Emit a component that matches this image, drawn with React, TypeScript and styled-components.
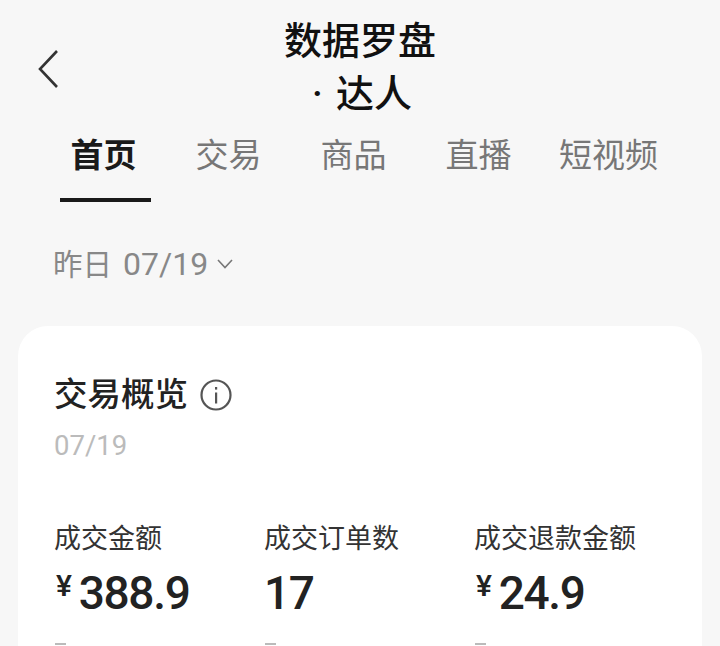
import React from 'react';
import styled, { createGlobalStyle } from 'styled-components';

const GlobalStyle = createGlobalStyle`
  html, body {
    margin: 0;
    padding: 0;
    height: 646px;
    overflow: hidden;
    background: #f7f7f7;
  }
  body {
    font-family: "Roboto", "Noto Sans CJK SC", sans-serif;
  }
`;

const Page = styled.div`
  width: 720px;
  height: 646px;
  overflow: hidden;
`;

const Header = styled.header`
  display: grid;
  grid-template-columns: 36px 1fr 36px;
  padding: 15px 36px 0;
  height: 111px;
  box-sizing: border-box;
`;

const BackButton = styled.div`
  display: flex;
  align-items: flex-start;
  padding-top: 34px;
`;

const Title = styled.h1`
  margin: 0;
  text-align: center;
  font-size: 38px;
  line-height: 53px;
  font-weight: 500;
  color: #111;
`;

const TitleLine = styled.div<{ $shift?: boolean }>`
  white-space: nowrap;
  word-spacing: ${(p) => (p.$shift ? 4 : 0)}px;
  padding-left: ${(p) => (p.$shift ? 4 : 0)}px;
`;

const Tabs = styled.nav`
  display: flex;
  padding-left: 41px;
  height: 91px;
`;

const Tab = styled.div<{ $active?: boolean; $wide?: boolean }>`
  position: relative;
  flex: 0 0 ${(p) => (p.$wide ? 135 : 125)}px;
  text-align: center;
  font-size: 33px;
  line-height: 90px;
  height: 91px;
  font-weight: ${(p) => (p.$active ? 700 : 400)};
  color: ${(p) => (p.$active ? '#1a1a1a' : '#777')};

  ${(p) =>
    p.$active &&
    `
    &::after {
      content: '';
      position: absolute;
      left: 19px;
      bottom: 0;
      width: 91px;
      height: 4px;
      background: #1a1a1a;
    }
  `}
`;

const DateRow = styled.div`
  display: flex;
  align-items: flex-start;
  gap: 9px;
  padding: 40px 0 0 53px;
  height: 124px;
  box-sizing: border-box;
  font-size: 29.5px;
  line-height: 44px;
  color: #888;
`;

const DateDigits = styled.span`
  font-size: 32px;
  margin-left: 11px;
`;

const Chevron = styled.svg`
  margin-top: 17px;
`;

const Card = styled.section`
  margin: 0 18px;
  background: #fff;
  border-radius: 30px;
  padding: 45px 36px 0;
  height: 400px;
`;

const CardHead = styled.div`
  display: flex;
  align-items: center;
  gap: 12px;
  height: 48px;
`;

const CardTitle = styled.h2`
  margin: 0;
  font-size: 33.5px;
  line-height: 48px;
  font-weight: 500;
  color: #222;
`;

const CardDate = styled.div`
  margin-top: 5px;
  font-size: 27.5px;
  line-height: 44px;
  color: #bbb;
`;

const Metrics = styled.div`
  display: grid;
  grid-template-columns: repeat(3, 210px);
  margin-top: 51px;
`;

const Metric = styled.div`
  display: flex;
  flex-direction: column;
`;

const MetricLabel = styled.div`
  font-size: 27px;
  line-height: 40px;
  color: #333;
`;

const MetricValue = styled.div`
  display: flex;
  align-items: flex-start;
  height: 68px;
  font-size: 46px;
  letter-spacing: -1.3px;
  line-height: 68px;
  font-weight: 500;
  color: #222;
`;

const Currency = styled.span`
  font-size: 30px;
  line-height: 53px;
  margin: 0 8px 0 2px;
`;

const Delta = styled.div`
  width: 11px;
  height: 2px;
  margin: 16px 0 0 1px;
  background: #bbb;
`;

const metrics = [
  { label: '成交金额', value: '388.9', money: true },
  { label: '成交订单数', value: '17', money: false },
  { label: '成交退款金额', value: '24.9', money: true },
];

const tabs = ['首页', '交易', '商品', '直播', '短视频'];

export default function App() {
  return (
    <Page>
      <GlobalStyle />
      <Header>
        <BackButton>
          <svg width="24" height="40" viewBox="0 0 24 40" fill="none">
            <path d="M21 2 L4 20 L21 38" stroke="#333" strokeWidth="2.6" />
          </svg>
        </BackButton>
        <Title>
          <TitleLine>数据罗盘</TitleLine>
          <TitleLine $shift>· 达人</TitleLine>
        </Title>
      </Header>
      <Tabs>
        {tabs.map((t, i) => (
          <Tab key={t} $active={i === 0} $wide={i === 4}>
            {t}
          </Tab>
        ))}
      </Tabs>
      <DateRow>
        <span>
          昨日<DateDigits>07/19</DateDigits>
        </span>
        <Chevron width="16" height="10" viewBox="0 0 16 10" fill="none">
          <path d="M1 1 L8 8.5 L15 1" stroke="#777" strokeWidth="1.6" />
        </Chevron>
      </DateRow>
      <Card>
        <CardHead>
          <CardTitle>交易概览</CardTitle>
          <svg width="32" height="32" viewBox="0 0 32 32" fill="none">
            <circle cx="16" cy="16" r="14.5" stroke="#555" strokeWidth="2.2" />
            <rect x="15" y="13.5" width="2.2" height="11" fill="#555" />
            <rect x="15" y="8" width="2.2" height="2.6" fill="#555" />
          </svg>
        </CardHead>
        <CardDate>07/19</CardDate>
        <Metrics>
          {metrics.map((m) => (
            <Metric key={m.label}>
              <MetricLabel>{m.label}</MetricLabel>
              <MetricValue>
                {m.money && <Currency>¥</Currency>}
                {m.value}
              </MetricValue>
              <Delta />
            </Metric>
          ))}
        </Metrics>
      </Card>
    </Page>
  );
}
